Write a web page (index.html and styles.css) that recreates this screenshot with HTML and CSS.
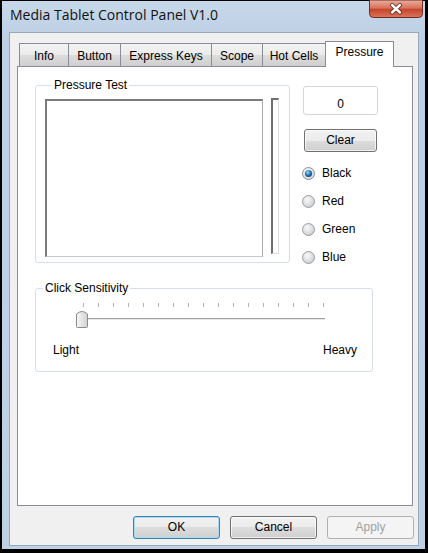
FILE: index.html
```html
<!DOCTYPE html>
<html>
<head>
<meta charset="utf-8">
<title>Media Tablet Control Panel V1.0</title>
<link rel="stylesheet" href="styles.css">
</head>
<body>
<div class="window">
  <div class="titlebar">
    <span class="title">Media Tablet Control Panel V1.0</span>
    <svg class="close" width="54" height="18" viewBox="0 0 54 18">
      <defs>
        <linearGradient id="cg" x1="0" y1="0" x2="0" y2="1">
          <stop offset="0" stop-color="#e9b0a0"/>
          <stop offset="0.45" stop-color="#d7735c"/>
          <stop offset="0.55" stop-color="#c7442c"/>
          <stop offset="1" stop-color="#d9775e"/>
        </linearGradient>
      </defs>
      <path d="M0.5,0 L53.5,0 L53.5,13.5 Q53.5,17.5 49.5,17.5 L4.5,17.5 Q0.5,17.5 0.5,13.5 Z" fill="url(#cg)" stroke="#6d2a20" stroke-width="1"/>
      <path d="M23,5 L31,12.5 M31,5 L23,12.5" stroke="#5a2118" stroke-width="4" stroke-linecap="round"/>
      <path d="M23,5 L31,12.5 M31,5 L23,12.5" stroke="#ffffff" stroke-width="2.4" stroke-linecap="round"/>
    </svg>
  </div>
  <div class="client">
    <div class="tabs">
      <div class="tab tab-info">Info</div>
      <div class="tab tab-button">Button</div>
      <div class="tab tab-express">Express Keys</div>
      <div class="tab tab-scope">Scope</div>
      <div class="tab tab-hot">Hot Cells</div>
      <div class="tab tab-pressure active">Pressure</div>
    </div>
    <div class="panel">
      <div class="top-row">
        <div class="group group-pressure">
          <div class="group-title">Pressure Test</div>
          <div class="pressure-body">
            <div class="canvas"></div>
            <div class="meter"></div>
          </div>
        </div>
        <div class="side">
          <div class="value">0</div>
          <div class="btn btn-clear">Clear</div>
          <div class="radios">
            <div class="radio">
              <svg width="13" height="13" viewBox="0 0 13 13">
                <defs>
                  <radialGradient id="rs" cx="0.4" cy="0.35" r="0.7">
                    <stop offset="0" stop-color="#ffffff"/>
                    <stop offset="1" stop-color="#cfd3d6"/>
                  </radialGradient>
                  <radialGradient id="rd" cx="0.4" cy="0.35" r="0.7">
                    <stop offset="0" stop-color="#9fdcfa"/>
                    <stop offset="0.5" stop-color="#2f7fbf"/>
                    <stop offset="1" stop-color="#0d3f77"/>
                  </radialGradient>
                </defs>
                <circle cx="6.5" cy="6.5" r="6" fill="url(#rs)" stroke="#8c9196" stroke-width="1"/>
                <circle cx="6.5" cy="6.5" r="3.6" fill="url(#rd)"/>
              </svg>
              <span>Black</span>
            </div>
            <div class="radio">
              <svg width="13" height="13" viewBox="0 0 13 13">
                <defs>
                  <radialGradient id="ru1" cx="0.4" cy="0.35" r="0.7">
                    <stop offset="0" stop-color="#fafafa"/>
                    <stop offset="1" stop-color="#c9cbcd"/>
                  </radialGradient>
                </defs>
                <circle cx="6.5" cy="6.5" r="6" fill="url(#ru1)" stroke="#9a9ea2" stroke-width="1"/>
              </svg>
              <span>Red</span>
            </div>
            <div class="radio">
              <svg width="13" height="13" viewBox="0 0 13 13">
                <circle cx="6.5" cy="6.5" r="6" fill="url(#ru1)" stroke="#9a9ea2" stroke-width="1"/>
              </svg>
              <span>Green</span>
            </div>
            <div class="radio">
              <svg width="13" height="13" viewBox="0 0 13 13">
                <circle cx="6.5" cy="6.5" r="6" fill="url(#ru1)" stroke="#9a9ea2" stroke-width="1"/>
              </svg>
              <span>Blue</span>
            </div>
          </div>
        </div>
      </div>
      <div class="group group-sens">
        <div class="group-title">Click Sensitivity</div>
        <svg class="slider" width="260" height="30" viewBox="0 0 260 30">
          <defs>
            <linearGradient id="tg" x1="0" y1="0" x2="1" y2="0">
              <stop offset="0" stop-color="#f7f7f7"/>
              <stop offset="1" stop-color="#d2d2d2"/>
            </linearGradient>
          </defs>
          <g stroke="#b4b4b4" stroke-width="1">
            <path d="M9.5,3 V7 M24.5,3 V7 M39.5,3 V7 M54.5,3 V7 M69.5,3 V7 M84.5,3 V7 M99.5,3 V7 M114.5,3 V7 M129.5,3 V7 M144.5,3 V7 M159.5,3 V7 M174.5,3 V7 M189.5,3 V7 M204.5,3 V7 M219.5,3 V7 M234.5,3 V7 M249.5,3 V7"/>
          </g>
          <rect x="13" y="18" width="238" height="1" fill="#a4a4a4"/>
          <rect x="13" y="19" width="238" height="1" fill="#e4e4e4"/>
          <path d="M2.5,14 Q8,9 13.5,14 L13.5,26.5 Q13.5,27.5 12.5,27.5 L3.5,27.5 Q2.5,27.5 2.5,26.5 Z" fill="url(#tg)" stroke="#8a8a8a" stroke-width="1"/>
        </svg>
        <div class="scale-labels">
          <span>Light</span>
          <span>Heavy</span>
        </div>
      </div>
    </div>
    <div class="buttons">
      <div class="btn btn-ok">OK</div>
      <div class="btn">Cancel</div>
      <div class="btn btn-disabled">Apply</div>
    </div>
  </div>
</div>
</body>
</html>
```
FILE: styles.css
```css
html, body {
  margin: 0;
  padding: 0;
  background: #000;
}
body {
  font-family: "Liberation Sans", Arial, sans-serif;
  font-size: 12px;
  color: #000;
  width: 428px;
  height: 553px;
  overflow: hidden;
}
.window {
  margin: 1px 0 0 2px;
  width: 423px;
  height: 548px;
  background: linear-gradient(#c8d8ea, #bccfe4 40px, #bfd1e5);
  display: flex;
  flex-direction: column;
}
.titlebar {
  height: 31px;
  display: flex;
  align-items: flex-start;
  justify-content: space-between;
  flex: none;
}
.title {
  font-family: "Open Sans", "Noto Sans", sans-serif;
  font-size: 14px;
  line-height: 18px;
  margin: 5px 0 0 8px;
  color: #111;
}
.close {
  display: block;
  margin: -1px 2px 0 0;
}
.client {
  margin: 0 6px 0 7px;
  height: 514px;
  box-sizing: border-box;
  border: 1px solid #97a8ba;
  background: #f0f0f0;
  display: flex;
  flex-direction: column;
}
.tabs {
  display: flex;
  align-items: flex-end;
  height: 25px;
  margin: 8px 0 0 7px;
  padding-left: 2px;
  flex: none;
}
.tab {
  box-sizing: border-box;
  height: 23px;
  padding-top: 5px;
  line-height: 14px;
  text-align: center;
  border-top: 1px solid #898c95;
  border-right: 1px solid #898c95;
  background: linear-gradient(#f3f3f3, #ebebeb 50%, #dddddd 50%, #cfcfcf);
  white-space: nowrap;
}
.tab-info { width: 50px; border-left: 1px solid #898c95; }
.tab-button { width: 52px; }
.tab-express { width: 91px; }
.tab-scope { width: 51px; }
.tab-hot { width: 63px; }
.tab-pressure { width: 69px; }
.tab.active {
  height: 26px;
  margin-bottom: -1px;
  margin-left: -1px;
  padding-top: 3px;
  border-left: 1px solid #898c95;
  background: #fff;
  position: relative;
  z-index: 1;
}
.panel {
  box-sizing: border-box;
  margin: 0 5px 0 7px;
  height: 440px;
  border: 1px solid #898c95;
  background: #fff;
  flex: none;
}
.top-row {
  display: flex;
  align-items: flex-start;
  margin: 18px 0 0 17px;
}
.group {
  box-sizing: border-box;
  border: 1px solid #d5dfe5;
  border-radius: 3px;
}
.group-title {
  width: fit-content;
  margin: -8px 0 0 7px;
  padding: 0 2px;
  line-height: 14px;
  background: #fff;
}
.group-pressure {
  width: 255px;
  padding: 0 0 5px 9px;
}
.pressure-body {
  display: flex;
  align-items: flex-start;
  margin-top: 7px;
}
.canvas {
  box-sizing: border-box;
  width: 218px;
  height: 158px;
  background: #fff;
  border-top: 2px solid #7b7b7b;
  border-left: 2px solid #7b7b7b;
  border-right: 1px solid #a8a8a8;
  border-bottom: 1px solid #c8c8c8;
}
.meter {
  box-sizing: border-box;
  width: 8px;
  height: 156px;
  margin: -1px 0 0 8px;
  background: #fff;
  border-top: 2px solid #6f6f6f;
  border-left: 2px solid #6f6f6f;
  border-right: 1px solid #dcdcdc;
  border-bottom: 1px solid #dcdcdc;
}
.side {
  margin: 1px 0 0 13px;
  display: flex;
  flex-direction: column;
  align-items: flex-start;
}
.value {
  box-sizing: border-box;
  width: 75px;
  height: 29px;
  border: 1px solid #d6d6d6;
  border-radius: 3px;
  padding-top: 10px;
  line-height: 14px;
  text-align: center;
  background: #fff;
}
.btn {
  box-sizing: border-box;
  width: 87px;
  height: 23px;
  line-height: 21px;
  text-align: center;
  border: 1px solid #707070;
  border-radius: 3px;
  background: linear-gradient(#f2f2f2, #ebebeb 50%, #dddddd 50%, #cfcfcf);
  box-shadow: inset 0 0 0 1px rgba(255, 255, 255, 0.7);
}
.btn-clear {
  width: 73px;
  margin: 14px 0 0 1px;
}
.radios {
  margin-top: 7px;
  display: flex;
  flex-direction: column;
}
.radio {
  height: 28px;
  display: flex;
  align-items: center;
  gap: 7px;
  margin-left: -1px;
}
.radio svg {
  display: block;
}
.radio span {
  line-height: 14px;
}
.group-sens {
  width: 338px;
  margin: 17px 0 0 17px;
  padding: 0 15px 14px 0;
}
.slider {
  display: block;
  margin: 5px 0 0 38px;
}
.scale-labels {
  display: flex;
  justify-content: space-between;
  margin: 13px 0 0 17px;
  line-height: 14px;
}
.buttons {
  display: flex;
  justify-content: flex-end;
  gap: 10px;
  margin: 10px 4px 0 0;
}
.btn-ok {
  border-color: #3c7fb1;
  box-shadow: inset 0 0 0 1px #a6dcf6;
}
.btn-disabled {
  border-color: #adb2b5;
  background: #f4f4f4;
  color: #a0a0a0;
  box-shadow: none;
}
```
